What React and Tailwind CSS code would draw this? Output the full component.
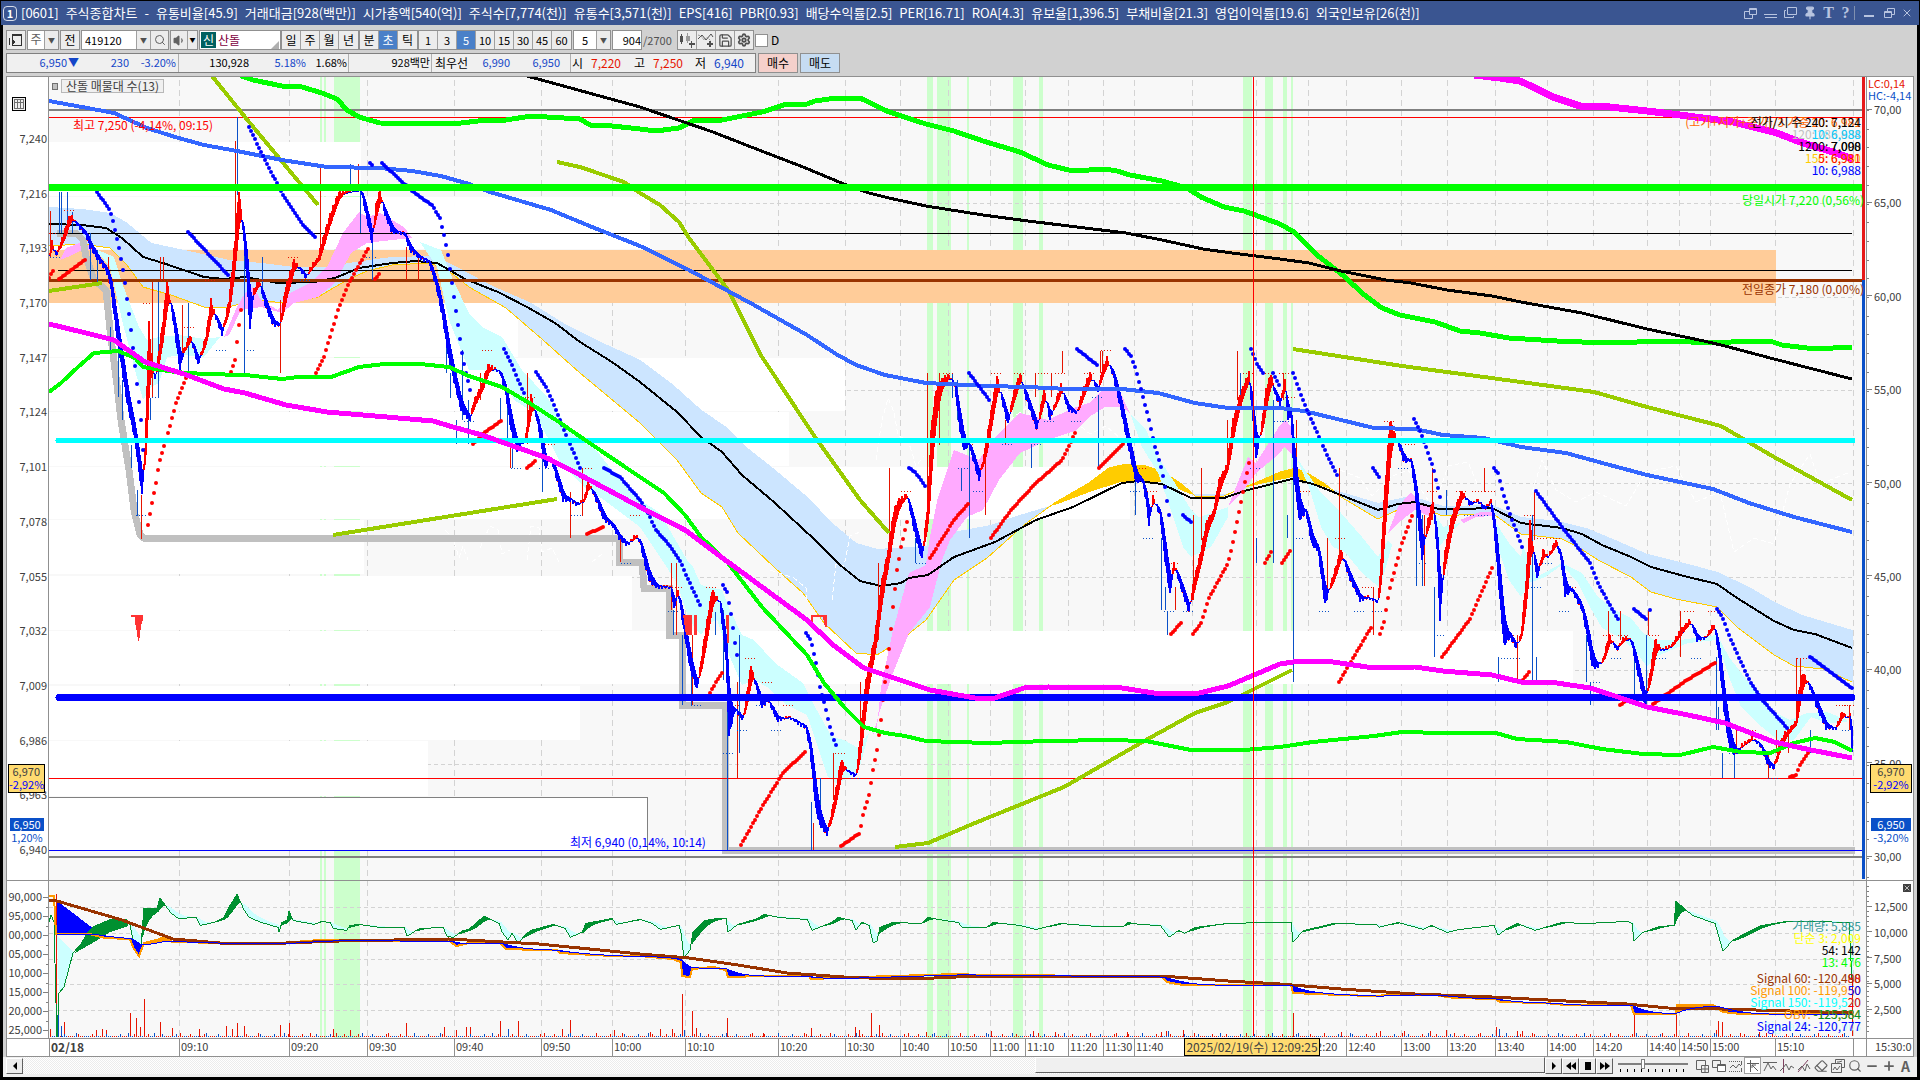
import { Search, Save, Settings, Volume1, Pin, Minus, Plus, X, Eraser } from 'lucide-react'

const FACTS = [
  '[0601]', '주식종합차트', '-', '유통비율[45.9]', '거래대금[928(백만)]', '시가총액[540(억)]', '주식수[7,774(천)]',
  '유통수[3,571(천)]', 'EPS[416]', 'PBR[0.93]', '배당수익률[2.5]', 'PER[16.71]', 'ROA[4.3]', '유보율[1,396.5]',
  '부채비율[21.3]', '영업이익률[19.6]', '외국인보유[26(천)]',
]
const TIMES = [
  ['02/18', 130], ['09:10', 110], ['09:20', 78], ['09:30', 87], ['09:40', 87], ['09:50', 71],
  ['10:00', 73], ['10:10', 93], ['10:20', 67], ['10:30', 55], ['10:40', 48], ['10:50', 42],
  ['11:00', 35], ['11:10', 43], ['11:20', 35], ['11:30', 31], ['11:40', 58], ['11:50', 64],
  ['12:10', 52], ['12:20', 38], ['12:40', 55], ['13:00', 46], ['13:20', 48], ['13:40', 52],
  ['14:00', 46], ['14:20', 54], ['14:40', 32], ['14:50', 31], ['15:00', 65], ['15:10', 78], ['', 13],
]
const GRID_X = TIMES.reduce((xs, [, w]) => [...xs, xs[xs.length - 1] + w], [49]).slice(1, -1)
const GRID_Y = [203, 297, 390, 483, 577, 670, 764, 907, 933, 959, 984, 1010]
const PRICES = ['7,240', '7,216', '7,193', '7,170', '7,147', '7,124', '7,101', '7,078', '7,055', '7,032', '7,009', '6,986', '6,963', '6,940']
const SCALE = ['70,00', '65,00', '60,00', '55,00', '50,00', '45,00', '40,00', '35,00', '30,00']
const OBV_LEFT = ['90,000', '95,000', '00,000', '05,000', '10,000', '15,000', '20,000', '25,000']
const OBV_RIGHT = ['12,500', '10,000', '7,500', '5,000', '2,500']

// signal zones: [x, width]
const ZONES = [
  [320, 2], [324, 2], [334, 26], [927, 6], [937, 14], [967, 2], [1013, 10], [1039, 4],
  [1243, 9], [1265, 8], [1283, 4], [1291, 2],
]
// volume profile: [top, bottom, right]
const PROFILE = [
  [142, 196, 361], [197, 249, 650], [303, 357, 518], [358, 411, 845], [412, 466, 789],
  [467, 519, 1130], [520, 574, 364], [576, 630, 632], [631, 684, 1573], [686, 740, 580], [741, 796, 428],
]

const LINES = [
  { c: '#00ff00', w: 5, p: '241,76 253,80 282,86 302,87 322,93 337,99 347,110 359,117 380,123 453,124 478,121 506,120 531,116 580,119 590,125 612,126 640,129 656,131 679,128 695,120 722,120 762,112 787,104 807,104 815,101 836,98 860,98 889,112 926,124 954,131 983,141 1020,152 1048,165 1073,171 1105,169 1117,171 1130,175 1162,181 1187,188 1201,197 1224,207 1244,211 1280,224 1294,232 1317,255 1345,277 1362,293 1382,308 1400,315 1435,322 1460,331 1480,333 1509,338 1557,341 1607,343 1668,341 1713,343 1749,341 1770,341 1782,345 1815,349 1852,347' },
  { c: '#000', w: 3, p: '527,76 640,107 681,121 713,132 746,145 803,167 844,184 869,193 889,198 926,206 983,215 1028,221 1126,233 1162,240 1203,249 1232,253 1280,259 1309,263 1341,271 1386,280 1411,283 1447,290 1492,296 1521,302 1582,313 1647,329 1704,341 1725,346 1774,359 1852,379' },
  { c: '#99cc00', w: 4, p: '212,76 245,117 318,205' },
  { c: '#99cc00', w: 4, p: '49,291 102,283' },
  { c: '#99cc00', w: 4, p: '333,535 445,517 557,499' },
  { c: '#99cc00', w: 4, p: '557,162 580,167 624,182 640,193 660,205 679,222 689,238 728,290 762,357 815,437 860,500 889,533' },
  { c: '#99cc00', w: 4, p: '895,847 928,843 975,823 1064,787 1146,740 1195,713 1228,702 1280,676 1292,670' },
  { c: '#99cc00', w: 4, p: '1293,349 1402,366 1484,377 1594,392 1647,407 1721,426 1774,457 1852,500' },
  { c: '#3366ff', w: 4, p: '49,101 82,107 114,113 147,128 175,137 204,145 237,151 282,160 327,167 380,168 412,171 441,176 469,184 490,192 551,210 592,227 640,246 689,270 754,305 807,335 836,354 856,365 885,375 926,383 987,386 1028,387 1068,389 1122,389 1158,393 1195,403 1228,408 1280,408 1304,411 1374,428 1415,429 1443,435 1484,438 1521,447 1566,453 1606,464 1647,475 1713,489 1749,503 1794,517 1852,532' },
]

const TOP_LINES = [
  { c: '#00ff00', w: 4, p: '49,392 61,383 78,367 94,353 118,351 135,358 143,367 175,372 204,374 245,375 282,379 298,377 331,377 359,367 384,364 420,364 449,367 469,376 502,387 531,404 559,422 588,442 640,477 664,493 685,515 701,537 728,563 762,607 807,655 824,683 844,707 864,727 885,733 905,736 926,741 987,743 1048,741 1109,740 1146,741 1191,750 1244,750 1280,747 1313,742 1374,736 1402,732 1443,733 1496,733 1517,739 1566,742 1602,749 1643,754 1680,755 1713,747 1741,752 1770,753 1794,743 1815,738 1835,742 1852,751' },
  { c: '#ff00ff', w: 5, p: '49,324 82,332 114,340 145,362 184,374 224,389 245,393 286,405 327,412 375,416 433,421 453,427 482,435 510,445 547,458 584,477 640,507 685,530 728,562 807,620 832,644 864,668 897,679 930,690 975,698 995,698 1024,688 1048,687 1122,688 1154,693 1195,694 1228,686 1280,664 1300,661 1333,662 1374,668 1415,667 1443,671 1492,675 1521,682 1557,683 1590,688 1615,696 1647,707 1688,715 1725,723 1774,742 1811,750 1852,758' },
  { c: '#ff00ff', w: 7, p: '1474,75 1500,78 1520,81 1533,87 1553,97 1580,106 1610,107 1647,111 1680,115 1733,122 1777,133 1800,142 1833,152 1853,159' },
]

const MID = '49,224 82,225 106,228 122,238 143,257 163,263 204,277 224,279 245,277 278,283 314,282 335,278 359,268 392,263 416,261 437,263 465,279 498,292 527,307 555,323 580,342 612,362 640,382 677,412 701,437 722,452 742,475 775,503 815,540 840,565 860,581 881,586 901,583 909,578 928,575 954,557 995,542 1036,520 1073,507 1122,483 1138,481 1162,484 1191,498 1224,498 1244,491 1280,482 1292,479 1313,484 1341,495 1378,510 1398,504 1415,502 1439,509 1460,509 1492,508 1521,523 1562,528 1582,534 1602,545 1631,557 1651,567 1684,576 1717,584 1737,598 1774,621 1794,630 1815,634 1852,648'
const BAND_TOP = '49,207 82,209 110,213 127,223 151,243 184,250 229,260 261,263 294,267 327,267 355,262 392,257 433,256 449,263 490,285 531,303 563,323 596,340 640,360 673,385 701,410 726,427 746,447 775,470 807,497 832,523 856,543 877,549 926,546 954,532 991,525 1020,515 1060,503 1089,492 1120,482 1162,482 1191,494 1228,494 1250,486 1292,477 1341,492 1378,503 1411,496 1443,506 1492,505 1521,517 1557,521 1586,528 1615,540 1647,554 1688,564 1717,572 1749,587 1774,602 1802,615 1852,630'
const BAND_BOTTOM = '49,246 82,244 110,248 127,265 143,287 171,295 204,307 229,307 253,300 286,303 318,297 347,280 367,271 392,265 429,263 445,268 469,287 506,308 543,340 580,373 604,393 640,423 677,460 701,493 722,507 738,533 775,568 803,593 824,623 856,653 877,655 901,640 926,620 954,580 987,558 1005,542 1024,525 1056,502 1089,483 1109,468 1126,464 1146,466 1162,471 1183,485 1195,496 1224,496 1240,489 1262,480 1280,472 1296,468 1309,474 1325,484 1341,497 1378,519 1402,508 1419,507 1443,516 1492,513 1521,534 1562,539 1578,547 1598,560 1631,577 1651,592 1676,599 1717,607 1737,627 1774,655 1794,666 1823,669 1852,682'

const CLOUDS = [
  ['#ccffff', '98,250 114,257 122,283 139,327 147,340 159,337 180,335 192,337 204,339 220,337 204,357 184,355 167,357 159,383 151,387 143,400 135,370 122,320 110,267 98,253'],
  ['#ffaaff', '60,260 66,248 82,242 98,250 82,250 70,256'],
  ['#ffaaff', '224,337 237,307 245,293 253,287 261,300 278,310 290,293 310,283 327,267 343,233 359,212 367,217 380,213 392,220 404,227 412,238 392,240 367,243 351,253 335,283 318,297 294,303 282,313 261,307 241,310 229,335'],
  ['#ccffff', '420,242 441,250 453,280 469,313 482,327 502,337 522,370 547,397 571,433 596,450 612,470 640,500 660,513 687,560 693,567 701,585 722,590 730,610 742,635 754,640 775,663 803,683 815,707 832,737 844,740 858,748 869,733 858,773 844,780 836,783 828,777 820,753 807,715 787,705 767,687 754,680 742,685 730,657 717,620 709,623 701,635 689,620 677,583 660,557 640,527 604,500 584,487 559,460 535,413 514,400 502,373 486,370 469,370 449,320 437,267'],
  ['#ffaaff', '877,727 881,687 893,630 909,573 926,565 930,537 938,497 954,450 979,460 995,437 1020,413 1048,420 1073,408 1089,403 1105,388 1118,388 1130,413 1122,407 1105,407 1089,417 1077,430 1048,440 1020,453 999,480 983,510 967,517 950,540 942,560 930,607 909,633 893,673 881,707 873,735'],
  ['#ccffff', '1130,413 1146,430 1158,457 1175,483 1191,510 1199,517 1211,513 1228,507 1228,517 1211,547 1191,557 1183,547 1171,510 1158,473 1142,447'],
  ['#ffaaff', '1228,507 1248,457 1256,463 1280,425 1286,420 1293,430 1295,457 1284,447 1280,453 1256,473 1244,490'],
  ['#ccffff', '1296,457 1321,493 1341,513 1362,537 1378,557 1388,540 1392,545 1380,588 1362,573 1345,552 1333,547 1321,527 1309,487'],
  ['#ffaaff', '1388,533 1398,507 1411,492 1419,502 1431,507 1431,517 1415,510 1398,523'],
  ['#ccffff', '1433,510 1443,527 1460,523 1447,537 1439,547'],
  ['#ffaaff', '1460,520 1480,512 1492,512 1492,516 1476,517 1464,523'],
  ['#ccffff', '1494,520 1509,543 1521,557 1523,547 1537,577 1562,563 1582,573 1598,597 1615,610 1631,618 1643,633 1655,640 1680,640 1717,635 1729,657 1749,683 1770,710 1790,720 1807,713 1827,712 1847,720 1847,722 1827,723 1811,717 1794,740 1778,740 1762,727 1741,707 1729,677 1717,640 1688,643 1655,657 1647,667 1635,650 1619,637 1602,628 1590,607 1578,583 1562,565 1545,577 1529,583 1521,597 1509,580 1498,547'],
]

const PRICE = '49,257 52,242 56,256 63,236 70,214 78,226 86,235 90,247 98,260 106,270 110,282 116,330 127,402 135,440 142,495 145,450 149,320 151,355 155,380 163,320 167,282 171,305 180,370 184,350 190,335 198,365 206,335 211,300 215,315 222,335 229,300 235,240 239,190 243,230 247,280 250,330 254,290 259,280 265,305 273,325 280,325 285,290 294,260 306,278 312,265 318,258 324,235 330,215 339,192 361,190 366,215 372,243 376,205 380,190 385,215 392,232 404,233 410,250 420,258 429,262 437,290 443,320 449,360 461,410 470,420 474,400 482,385 488,365 500,372 506,395 511,430 517,450 525,440 531,395 537,420 545,468 551,458 557,480 563,500 571,500 577,505 584,500 588,480 594,495 604,520 612,525 619,538 627,545 636,535 640,542 645,565 650,582 657,587 671,587 674,610 678,590 683,625 690,668 697,690 704,640 712,590 720,603 726,660 729,735 735,710 743,720 751,665 758,695 762,707 768,700 777,720 789,717 797,722 806,728 810,750 816,810 820,825 827,835 835,795 841,760 847,770 856,777 860,740 866,680 875,635 881,585 888,550 894,510 899,500 907,494 914,530 922,560 928,500 931,430 936,390 943,378 949,375 955,388 960,430 964,450 969,445 979,480 985,450 992,405 997,376 1003,405 1008,425 1013,395 1020,373 1025,395 1030,410 1037,430 1044,388 1050,420 1056,400 1061,385 1068,410 1077,413 1083,390 1090,373 1098,392 1102,370 1107,358 1113,375 1121,410 1128,445 1136,482 1142,480 1146,500 1149,525 1153,497 1160,515 1165,560 1170,595 1174,562 1180,585 1189,612 1194,580 1200,555 1207,520 1213,513 1219,480 1227,465 1233,420 1240,395 1249,373 1252,410 1256,460 1261,430 1266,390 1271,373 1275,395 1280,405 1285,380 1288,420 1291,415 1294,480 1297,500 1299,520 1306,512 1312,545 1318,550 1325,605 1331,583 1341,550 1349,577 1360,600 1368,597 1378,602 1381,560 1384,500 1390,420 1397,440 1404,462 1411,460 1416,500 1422,560 1428,520 1433,500 1437,550 1440,620 1445,550 1452,515 1462,491 1470,505 1478,500 1484,510 1491,500 1495,540 1500,600 1504,645 1510,637 1516,647 1521,635 1526,580 1530,522 1537,580 1543,550 1548,557 1556,540 1561,560 1565,595 1572,590 1582,610 1588,640 1592,665 1596,668 1603,660 1609,635 1617,650 1624,637 1631,640 1637,670 1645,705 1649,680 1655,640 1662,650 1672,645 1681,630 1690,620 1697,640 1706,637 1714,623 1718,650 1724,710 1729,745 1735,755 1742,745 1752,738 1760,745 1768,765 1774,768 1779,745 1785,733 1796,722 1799,690 1803,672 1809,685 1816,705 1826,728 1836,728 1842,712 1848,718 1850,712 1852,752'

const STOP = '57,233 76,233 83,240 86,257 94,280 106,290 110,330 117,385 121,420 129,470 134,510 140,535 144,538 619,538 619,562 642,562 644,588 669,588 669,635 682,635 682,705 725,705 725,850 1855,850'

const SAR_DOWN = [
  '97,192 110,210 114,225 118,243 124,275 131,330 136,375 141,420 143,450', '188,232 228,275',
  '249,127 265,160 282,193 303,225 315,237', '370,163 373,166',
  '382,163 400,180 416,194 432,205 440,218 444,235 448,255 453,290 458,325 463,360 470,390',
  '504,349 512,365 518,380 525,395', '536,372 545,385 552,400 560,420 568,440 575,455 580,468',
  '604,468 620,477 640,500 648,513 656,530 671,547 681,562 687,577 701,607',
  '723,585 727,592 732,620 735,643 737,655', '806,633 811,640 816,663 820,687 826,710 830,727 834,740 837,748',
  '909,468 915,472 926,487', '969,373 990,401', '1077,349 1097,365',
  '1125,349 1131,356 1136,370 1143,397 1149,420 1155,447 1160,463 1164,480 1169,515', '1183,515 1192,523',
  '1251,349 1256,362 1263,373', '1273,373 1280,387', '1293,373 1304,403 1317,432 1327,455 1337,475',
  '1373,468 1379,477', '1414,419 1421,433 1427,450 1433,467 1440,497',
  '1494,468 1498,473 1503,493 1511,517 1517,533 1522,547', '1536,491 1562,527 1590,563 1598,583 1607,600 1619,621',
  '1634,609 1647,620', '1650,610 1650,610', '1717,609 1722,616 1729,635 1739,658 1751,683 1764,702 1788,729',
  '1810,657 1852,688',
]
const SAR_UP = [
  '49,278 54,269', '59,279 86,259', '148,525 152,503 156,483 159,463 165,443 169,430 176,403 186,378',
  '231,372 235,360 238,333 241,310 242,300', '316,373 324,357 329,340 339,307 349,283 369,247',
  '375,279 380,273', '473,444 484,433 502,420', '527,468 535,461', '587,534 603,527', '710,693 716,682 722,673',
  '741,845 762,807 783,773 805,752',
  '841,846 860,833 862,818 869,795 873,770 877,750 881,720 884,690 887,667 890,640 893,607 897,570 901,547 907,522',
  '930,558 954,520 968,504', '991,538 1011,510 1036,483 1062,460 1067,450 1075,433', '1099,468 1124,443',
  '1171,634 1182,622', '1193,634 1201,623 1209,598 1228,563 1232,547 1238,517 1244,487 1249,463',
  '1265,563 1271,552', '1282,563 1291,549', '1339,682 1372,626', '1380,634 1384,622 1389,592 1396,565 1402,543 1413,513',
  '1442,657 1470,619 1492,568', '1523,680 1530,671', '1620,705 1626,701', '1653,704 1684,682 1715,663',
  '1790,777 1796,775 1800,765 1808,753',
]

// candle wicks: x, top, bottom
const WICKS_UP = [
  [50, 211, 257], [108, 257, 283], [141, 495, 539], [152, 282, 398], [160, 257, 280], [163, 257, 280],
  [182, 305, 355], [235, 141, 230], [280, 300, 373], [320, 164, 260], [358, 164, 187], [406, 247, 280],
  [418, 255, 280], [480, 373, 400], [510, 444, 468], [527, 373, 444], [570, 492, 538], [582, 468, 516],
  [620, 538, 562], [671, 563, 610], [676, 563, 635], [692, 635, 705], [737, 682, 778], [813, 823, 850],
  [833, 753, 800], [860, 682, 760], [878, 563, 640], [889, 468, 560], [927, 373, 520], [939, 373, 445],
  [985, 440, 515], [1005, 420, 445], [1035, 373, 397], [1051, 373, 397], [1062, 351, 373], [1100, 351, 373],
  [1102, 351, 373], [1175, 587, 610], [1193, 515, 600], [1201, 468, 540], [1227, 420, 470], [1237, 351, 400],
  [1283, 373, 400], [1296, 420, 480], [1327, 538, 600], [1339, 468, 560], [1373, 587, 635], [1424, 515, 586],
  [1432, 468, 520], [1484, 468, 492], [1517, 635, 682], [1534, 492, 540], [1608, 611, 650], [1620, 611, 640],
  [1648, 611, 635], [1680, 611, 657], [1736, 730, 753], [1768, 753, 778], [1776, 730, 753], [1788, 730, 753],
  [1796, 658, 720], [1800, 658, 690], [1849, 705, 730],
]
const WICKS_DOWN = [
  [59, 192, 233], [61, 192, 233], [67, 192, 230], [72, 212, 233], [90, 233, 280], [97, 250, 283],
  [110, 327, 350], [118, 340, 397], [122, 380, 420], [131, 445, 468], [137, 490, 516], [150, 398, 420],
  [158, 282, 398], [188, 303, 373], [237, 117, 195], [244, 230, 373], [262, 257, 298], [350, 164, 187],
  [360, 190, 233], [372, 240, 280], [446, 330, 373], [450, 373, 398], [456, 420, 444], [462, 350, 420],
  [468, 400, 444], [500, 398, 420], [507, 400, 444], [512, 444, 468], [542, 430, 492], [673, 610, 635],
  [682, 635, 705], [691, 668, 705], [715, 612, 635], [723, 610, 680], [727, 640, 850], [739, 635, 753],
  [811, 802, 850], [820, 778, 825], [915, 538, 563], [952, 373, 398], [957, 380, 420], [961, 468, 491],
  [969, 440, 538], [1031, 445, 468], [1098, 395, 468], [1135, 480, 515], [1161, 538, 610], [1165, 587, 610],
  [1167, 612, 635], [1240, 373, 400], [1256, 538, 563], [1273, 400, 563], [1287, 515, 538], [1293, 480, 682],
  [1416, 500, 586], [1422, 515, 586], [1434, 587, 657], [1446, 490, 515], [1498, 657, 682], [1532, 515, 682],
  [1536, 657, 682], [1586, 635, 682], [1590, 682, 705], [1634, 657, 705], [1646, 635, 705], [1716, 657, 730],
  [1718, 707, 730], [1722, 753, 778], [1734, 753, 778], [1810, 730, 753],
]
const TICKS = [117, 164, 188, 210, 233, 257, 280, 303, 327, 350, 373, 397, 421, 444, 468, 491, 515, 538, 563, 587, 611, 635, 658, 682, 705, 730, 753, 778, 802, 826, 850]

const BROWN = '49,900 57,901 122,920 173,939 220,943 286,943 339,941 449,939 539,944 640,954 689,958 738,965 787,973 844,977 869,978 934,978 979,976 1162,976 1228,981 1280,984 1341,989 1415,994 1492,997 1566,1001 1627,1004 1668,1008 1721,1009 1790,1011 1852,1013'
const OBV = '57,934 90,934 94,935 102,937 106,938 130,939 133,947 139,956 144,943 157,940 163,937 173,942 224,943 280,943 320,940 450,941 456,946 469,943 500,943 506,949 540,950 557,950 560,953 612,956 640,956 673,959 681,962 682,976 690,977 692,969 713,967 726,970 728,977 762,976 775,976 809,976 811,979 860,977 958,974 979,975 1130,976 1162,977 1167,982 1183,985 1252,985 1291,985 1293,993 1341,995 1374,996 1402,994 1435,995 1455,998 1496,999 1500,1002 1545,1003 1566,1005 1631,1005 1634,1014 1676,1014 1677,1005 1713,1005 1723,1012 1741,1014 1852,1014'
const FORCE = '102,923 127,920 130,925 133,940 141,945 144,908 157,908 160,898 171,913 178,918 196,917 200,925 214,922 224,917 229,907 237,894 244,910 249,917 261,922 278,927 279,932 282,922 287,920 289,911 293,920 314,924 322,921 330,922 333,928 347,930 350,925 359,924 380,927 404,927 407,936 420,928 443,927 447,936 454,937 463,930 469,929 484,916 499,923 502,932 508,940 512,933 518,943 527,933 531,930 553,924 565,928 570,937 582,932 586,923 612,918 616,924 640,919 652,923 660,929 679,925 681,933 684,958 690,950 693,932 705,920 718,918 726,918 728,932 738,924 758,918 764,914 779,917 793,918 807,919 812,930 832,922 838,917 852,920 856,930 862,922 869,925 873,942 877,941 880,927 893,922 922,923 928,917 944,920 958,922 962,927 987,927 993,922 1020,925 1036,929 1060,923 1097,926 1124,926 1128,922 1140,924 1160,925 1169,937 1179,930 1185,933 1195,927 1228,923 1264,922 1291,922 1293,942 1304,930 1317,927 1333,923 1376,924 1379,927 1398,922 1423,929 1431,925 1447,932 1460,929 1494,925 1498,935 1509,927 1517,923 1535,930 1562,922 1586,923 1627,921 1632,923 1634,941 1643,932 1660,926 1674,925 1676,901 1692,915 1715,923 1723,951 1733,940 1745,933 1762,925 1786,921 1815,921 1849,922 1852,980'

const VOLUME_UP = [
  [50, 1029], [64, 1022], [96, 1030], [102, 1029], [106, 1030], [130, 1013], [136, 1018], [140, 1027], [144, 999],
  [160, 1022], [172, 1028], [199, 1029], [226, 1026], [232, 1029], [237, 1023], [244, 1026], [280, 1025],
  [289, 1023], [333, 1029], [350, 1030], [406, 1023], [444, 1027], [456, 1030], [466, 1027], [470, 1027],
  [500, 1021], [518, 1021], [562, 1029], [570, 1020], [614, 1030], [650, 1032], [660, 1029], [672, 1029],
  [682, 994], [692, 1011], [696, 1028], [727, 1018], [763, 1033], [811, 1028], [855, 1027], [859, 1030],
  [871, 1013], [879, 1025], [926, 1032], [991, 1031], [1033, 1031], [1055, 1032], [1127, 1032], [1161, 1032],
  [1166, 1031], [1183, 1030], [1293, 1013], [1341, 1032], [1380, 1031], [1404, 1031], [1430, 1031], [1446, 1030],
  [1496, 1027], [1517, 1031], [1522, 1031], [1634, 1005], [1676, 1010], [1716, 1030], [1718, 1021], [1722, 1022],
  [1759, 1032],
]

const parse = (s) => s.split(' ').map((p) => p.split(',').map(Number))

function sample(s, step) {
  const pts = parse(s)
  const out = []
  let i = 0
  for (let x = pts[0][0]; x <= pts[pts.length - 1][0]; x += step) {
    while (i < pts.length - 2 && pts[i + 1][0] < x) i++
    const [x0, y0] = pts[i]
    const [x1, y1] = pts[i + 1]
    out.push([x, x1 === x0 ? y0 : y0 + ((y1 - y0) * (x - x0)) / (x1 - x0)])
  }
  return out
}

function ema(pts, k) {
  let v = pts[0][1]
  return pts.map(([x, y]) => {
    v += (y - v) * k
    return [x, v]
  })
}

const toPath = (pts) => 'M' + pts.map(([x, y]) => `${x} ${Math.round(y)}`).join('L')

// vertical strips between two lines, split by which one is on top
function between(a, b) {
  let up = ''
  let down = ''
  a.forEach(([x, y], i) => {
    const s = `M${x} ${Math.round(y)}V${Math.round(b[i][1])}`
    if (y < b[i][1]) up += s
    else down += s
  })
  return { up, down }
}

const dots = (list) => list.map((s) => sample(s, 2).map(([x, y]) => `M${x} ${Math.round(y)}h.01`).join('')).join('')
const wicks = (list) => list.map(([x, a, b]) => `M${x + 0.5} ${a}V${b}`).join('')

const fast = sample(PRICE, 1).map(([x, y]) => [x, y + Math.sin(x * 1.9) * 2])
const slow = ema(fast, 0.22)
const priceFill = between(fast, slow)
const bandTop = sample(BAND_TOP, 1)
const bandFill = between(bandTop, sample(BAND_BOTTOM, 1))
const force = sample(FORCE, 1)
const forceAvg = ema(force, 0.12)
const forceFill = between(force, forceAvg)
const obv = sample(OBV, 1)
const obvAvg = ema(obv, 0.06)
const obvFill = between(obv, obvAvg)

// dotted high and low marks at each turn of the price
const turns = parse(PRICE).reduce(
  (acc, [x, y], i, all) => {
    if (i === 0 || i === all.length - 1) return acc
    const [a, b] = [all[i - 1][1], all[i + 1][1]]
    if (y < a && y < b) acc.high += `M${x - 6} ${[...TICKS].reverse().find((t) => t <= y + 2) || 117}.5h12`
    if (y > a && y > b) acc.low += `M${x - 6} ${TICKS.find((t) => t >= y - 2)}.5h12`
    return acc
  },
  { high: '', low: '' },
)

let noiseUp = ''
let noiseDown = ''
for (let i = 0; i < 900; i++) {
  const h = 1 + ((i * 7919) % 13 === 0 ? 3 : (i * 31) % 7 === 0 ? 2 : 0)
  const s = `M${50.5 + i * 2} 1037v-${h}`
  if ((i * 53) % 11 < 6) noiseUp += s
  else noiseDown += s
}

function Chart() {
  return (
    <svg viewBox="49 77 1817 961" preserveAspectRatio="none" className="block h-[961px] w-full" fill="none" shapeRendering="crispEdges">
      <rect x="49" y="77" width="1817" height="961" fill="#f8f8f8" />
      {ZONES.map(([x, w]) => (
        <rect key={x} x={x} y="77" width={w} height="961" fill="#ccffcc" />
      ))}
      <g stroke="#d3d3d3" strokeDasharray="6 4">
        {GRID_X.map((x) => (
          <path key={x} d={`M${x + 0.5} 80V1038`} />
        ))}
        {GRID_Y.map((y) => (
          <path key={y} d={`M49 ${y}.5H1852`} strokeDasharray="4 3" />
        ))}
      </g>
      {PROFILE.map(([a, b, r]) => (
        <rect key={a} x="49" y={a} width={r - 49} height={b - a} fill="#fff" />
      ))}
      <rect x="48" y="797.5" width="599.5" height="53" fill="#fff" stroke="#808080" />
      <rect x="49" y="250" width="1727" height="53" fill="#ffcc99" />
      <g stroke="#fff" strokeDasharray="5 3">
        <path d="M445 530l8 8 6 20 4-12 5 14M480 548l10-22 8 4 4 24 8-4M527 560l4-34 8 2 3 24 10-4 8 16M592 562l10-8" />
        <path d="M876 460l6-40 6-22 6 14 4 24 10 4 8 26 8-10M1010 420l16-12 8 14 12-10 14 16 18-4 12 10 16-8 14 12" />
        <path d="M1330 500l10-30 20 8 12 18 20-20 16-6 20 30M1440 490l8-24 20-4 10 24M1530 500l12-40 14 30 20 12 20-10 30 14 20-34 30-6 20 36 24-10 14 60 20-14 20 6 16-60 20-30 10 30 30-12" />
      </g>

      <path d={bandFill.up} stroke="#cce5ff" strokeWidth="1.6" />
      <path d={bandFill.down} stroke="#ffcc00" strokeWidth="1.6" />
      <polyline points={BAND_BOTTOM} stroke="#ffcc00" />
      <path d="M770 570l24 8 12 10v14M832 600l4-36 8 2 6-30 10-4" stroke="#fff" strokeDasharray="5 3" />
      {CLOUDS.map(([c, p]) => (
        <polygon key={p} points={p} fill={c} />
      ))}
      <polyline points={STOP} stroke="#c0c0c0" strokeWidth="7" />
      <polyline points={MID} stroke="#000" strokeWidth="2" />

      <path d="M49 110H1862" stroke="#808080" strokeWidth="2" />
      <path d="M49 857H1862" stroke="#808080" strokeWidth="2" />
      <path d="M49 233.5H1852M58 270.5H1852" stroke="#000" />
      <path d="M49 117.5H1862M49 778.5H1862" stroke="#ff0000" />
      <path d="M49 280.5H1862" stroke="#993300" strokeWidth="3" />

      <path d={wicks(WICKS_UP)} stroke="#e61400" />
      <path d={wicks(WICKS_DOWN)} stroke="#0a50c8" />
      <path d={turns.high} stroke="#e61400" strokeDasharray="1 2" />
      <path d={turns.low} stroke="#0a50c8" strokeDasharray="1 2" />
      <path d={toPath(fast)} stroke="#ff0000" />
      <path d={toPath(slow)} stroke="#0000d8" />
      <path d={priceFill.up} stroke="#ff0000" strokeWidth="1.6" />
      <path d={priceFill.down} stroke="#0000ff" strokeWidth="1.6" />
      <path d="M131 615h12v5l-2 6-1 9-1 6h-1l-1-8-2-11v-5h-4zM683 615h9v20h-6zM694 615h3v20h-3zM726 615h3v28h-2z" fill="#ff3333" />
      <path d="M812 625v-9h14v11l-2-10" stroke="#ff3333" strokeWidth="2" />

      {LINES.map((l) => (
        <polyline key={l.p} points={l.p} stroke={l.c} strokeWidth={l.w} />
      ))}
      <g strokeWidth="4" strokeLinecap="round" shapeRendering="auto">
        <path d={dots(SAR_DOWN)} stroke="#0000ff" />
        <path d={dots(SAR_UP)} stroke="#ff0000" />
      </g>
      <path d="M49 187.5H1862" stroke="#00ff00" strokeWidth="7" />
      <path d="M58 440.5H1853" stroke="#00ffff" strokeWidth="5" strokeLinecap="round" />
      <path d="M59 697.5H1852" stroke="#0000ff" strokeWidth="7" strokeLinecap="round" />
      {TOP_LINES.map((l) => (
        <polyline key={l.p} points={l.p} stroke={l.c} strokeWidth={l.w} />
      ))}
      <path d="M49 850.5H1862" stroke="#0000ff" />
      <path d="M1863.5 77V280" stroke="#e61919" strokeWidth="3" />
      <path d="M1863.5 280V879" stroke="#0a50c8" strokeWidth="3" />

      <path d="M49 880.5H1866" stroke="#909090" />
      <path d={noiseUp + VOLUME_UP.map(([x, y]) => `M${x + 0.5} 1037V${y}`).join('')} stroke="#e61400" />
      <path d={noiseDown + 'M58.5 1037V1003M61.5 1037V1026M508.5 1037V1029M1499.5 1037V1029M684.5 1037V1030M1168.5 1037V1031'} stroke="#0a50c8" />
      <path d="M56.5 894V1037M1852.5 970V1036" stroke="#e61400" />
      <path d="M57 935L66 945L74 953L69 970L64 986L59 993z" fill="#ccffff" />
      <path d={forceFill.down} stroke="#ccffff" strokeWidth="1.6" />
      <path d="M57 901L102 935H57z" fill="#0000ff" />
      <path d="M75 953L88 931L94 926L110 919L127 919L128 926L110 932L96 941z" fill="#009030" />
      <path d={forceFill.up} stroke="#009030" strokeWidth="1.6" />
      <path d={'M49 922L51 915L54 922L56 1003L57 1037L59 993L64 987L73 953L82 943L88 933' + toPath(force).replace('M', 'L')} stroke="#009030" />
      <path d={obvFill.up} stroke="#ff9900" strokeWidth="1.6" />
      <path d={obvFill.down} stroke="#0000ff" strokeWidth="1.6" />
      <path d={'M49 896L54 896L56 934' + toPath(obv).replace('M', 'L')} stroke="#ff9900" strokeWidth="2" />
      <polyline points={BROWN} stroke="#993300" strokeWidth="3" />
      <path d={toPath(obvAvg)} stroke="#0000ff" />
      <path d="M1253.5 77V1036" stroke="#ff0000" />
    </svg>
  )
}

function Overlap({ texts }) {
  return (
    <div className="grid justify-items-end">
      {texts.map(([t, c]) => (
        <span key={t} className={`col-start-1 row-start-1 ${c}`}>{t}</span>
      ))}
    </div>
  )
}

function Labels() {
  return (
    <div className="pointer-events-none absolute inset-0 text-xs leading-3 whitespace-nowrap">
      <div className="absolute top-0.5 left-[3px] flex items-center gap-[3px]">
        <span className="h-[7px] w-[6px] border border-[#707070] bg-[#c0c0c0]" />
        <span className="border border-[#b8b8b8] bg-[#f0f0f0] px-1 text-[#404040]">산돌 매물대 수(13)</span>
      </div>
      <span className="absolute top-[42px] left-6 text-[#ff0000]">최고 7,250 (-4,14%, 09:15)</span>
      <span className="absolute top-[759px] left-[521px] text-[#0000ff]">최저 6,940 (0,14%, 10:14)</span>
      <div className="absolute top-[39px] right-[5px]">
        <Overlap texts={[['(고가+저가+종가)/3 가중 20: 6,981', 'text-[#ff6600]'], ['전가/시 수 240: 7,124', 'text-black']]} />
        <Overlap texts={[['120: 288,834', 'text-[#c0c0c0]'], ['10: 6,988', 'text-[#00ccff]']]} />
        <Overlap texts={[['1200: 7,098', 'text-black'], ['7,000', 'text-black']]} />
        <Overlap texts={[['150: 6,990', 'text-[#ffcc00]'], ['5: 6,981', 'text-[#ff0000]']]} />
        <Overlap texts={[['30: 6,988', 'text-[#cce5ff]'], ['10: 6,988', 'text-[#0000ff]']]} />
      </div>
      <span className="absolute top-[117px] right-0.5 text-[#00ff00]">당일시가 7,220 (0,56%)</span>
      <span className="absolute top-[206px] right-0.5 text-[#993300]">전일종가 7,180 (0,00%)</span>
      <div className="absolute top-[843px] right-[5px] text-right">
        <p className="text-[#339999]">거래량: 5,885</p>
        <p className="text-[#ffff00]">단순 3: 2,009</p>
        <p className="text-black">54: 142</p>
        <p className="text-[#00ff00]">13: 476</p>
        <div className="mt-1">
          <Overlap texts={[['88', 'text-[#ff0000]'], ['Signal 60: -120,490', 'text-[#993300]']]} />
          <Overlap texts={[['Signal 100: -119,950', 'text-[#ff9900]'], ['50', 'text-[#0000ff]']]} />
          <Overlap texts={[['Signal 150: -119,520', 'text-[#00ffff]'], ['20', 'text-[#ff0000]']]} />
          <Overlap texts={[['OBV: -125,504', 'text-[#ff9900]'], ['-125,584', 'text-[#009030]']]} />
          <Overlap texts={[['Signal 9: -120,903', 'text-[#ccffff]'], ['Signal 24: -120,777', 'text-[#0000ff]']]} />
        </div>
      </div>
    </div>
  )
}

function LeftAxis() {
  return (
    <div className="relative w-[42px] shrink-0 border-r border-[#909090] bg-white text-right text-[11px] leading-[14px] text-[#404040]">
      <div className="flex h-[804px] flex-col justify-between border-b border-[#909090] pt-[54px] pr-px pb-6">
        {PRICES.map((p) => <span key={p}>{p}</span>)}
      </div>
      <div className="flex h-[157px] flex-col justify-between pt-2 pr-1.5 pb-0.5">
        {OBV_LEFT.map((p) => <span key={p} className="-ml-1">{p}</span>)}
      </div>
      <svg className="absolute top-[819px] right-0 h-[142px] w-[5px]" stroke="#808080" shapeRendering="crispEdges">
        {OBV_LEFT.map((p, i) => <path key={p} d={`M0 ${1.5 + i * 19}h5M3 ${11.5 + i * 19}h2`} />)}
      </svg>
      <svg viewBox="0 0 14 14" className="absolute top-5 left-[5px] size-[14px] bg-[#f0f0f0]" fill="none" stroke="#707070" shapeRendering="crispEdges">
        <path d="M.5 .5h13v13H.5z" stroke="#000" />
        <path d="M2.500 2.500h9v9h-9zM5.500 2.500v9M8.500 2.500v9M2.500 5.500h9" />
      </svg>
      <div className="absolute top-[687px] left-px h-[29px] w-[37px] border border-black bg-[#ffdb70]">
        <p className="pr-1 leading-[13px]">6,970</p>
        <p className="pr-px leading-[13px] text-[#0000ff]">-2,92%</p>
      </div>
      <div className="absolute top-[741px] left-[3px] w-[34px] text-center">
        <p className="bg-[#0a50c8] leading-[13px] text-white">6,950</p>
        <p className="leading-3 text-[#0a50c8]">1,20%</p>
      </div>
    </div>
  )
}

function RightAxis() {
  return (
    <div className="relative w-[47px] shrink-0 overflow-hidden border-l border-[#909090] bg-white text-[11px] leading-[14px] text-[#404040]">
      <div className="flex h-[804px] flex-col justify-between border-b border-[#909090] pt-[25px] pb-[17px]">
        {SCALE.map((p) => (
          <span key={p} className="flex items-center gap-[2px]"><i className="h-px w-[5px] bg-[#808080]" />{p}</span>
        ))}
      </div>
      <div className="flex h-[157px] flex-col justify-between pt-[18px] pb-[22px]">
        {OBV_RIGHT.map((p) => (
          <span key={p} className="flex items-center gap-[2px]"><i className="h-px w-[5px] bg-[#808080]" />{p}</span>
        ))}
      </div>
      <svg className="absolute top-0 left-0 h-[961px] w-[3px]" stroke="#808080" shapeRendering="crispEdges">
        {Array.from({ length: 42 }, (_, i) => <path key={i} d={`M0 ${33.5 + Math.round(i * 18.7)}h2`} />)}
        {Array.from({ length: 30 }, (_, i) => <path key={i} d={`M0 ${809.5 + i * 5}h2`} />)}
      </svg>
      <div className="absolute top-0 left-px leading-3">
        <p className="text-[#e61400]">LC:0,14</p>
        <p className="text-[#0a50c8]">HC:-4,14</p>
      </div>
      <div className="absolute top-[687px] left-[3px] h-[29px] w-[42px] border border-black bg-[#ffdb70] text-center">
        <p className="leading-[13px]">6,970</p>
        <p className="leading-[13px] text-[#0000ff]">-2,92%</p>
      </div>
      <div className="absolute top-[741px] left-1 w-10 text-center">
        <p className="bg-[#0a50c8] leading-[13px] text-white">6,950</p>
        <p className="leading-3 text-[#0a50c8]">-3,20%</p>
      </div>
      <button aria-label="Close pane" className="absolute top-[807px] right-0.5 size-2 bg-[#404040] text-white"><X className="size-2" /></button>
    </div>
  )
}

function TimeAxis() {
  return (
    <div className="relative flex h-[19px] border-t border-b border-[#909090] bg-white text-[11px] leading-[15px] text-[#404040]">
      <div className="w-[42px] shrink-0" />
      <div className="flex min-w-0 flex-1 whitespace-nowrap">
        {TIMES.map(([t, w], i) => (
          <span key={i} className="min-w-0 basis-0" style={{ flexGrow: w }}>
            <span className={`block h-full border-l border-[#909090] pl-px ${i === 0 ? 'text-xs leading-[15px] font-bold' : ''}`}>{t}</span>
          </span>
        ))}
      </div>
      <div className="w-[47px] shrink-0 overflow-hidden border-l border-[#909090] pl-2 whitespace-nowrap">15:30:0</div>
      <div className="absolute -top-px right-[593px] h-[18px] w-[136px] border border-black bg-[#ffdb70] text-center text-xs leading-[15px] whitespace-nowrap">2025/02/19(수) 12:09:25</div>
    </div>
  )
}

const btn = 'flex h-full items-center justify-center border-r border-[#a0a0a0] last:border-r-0'
const group = 'flex h-5 shrink-0 border border-[#909090] bg-[#ececec]'

function Group({ items, active }) {
  return (
    <div className={`${group} -ml-px`}>
      {items.map((t) => (
        <button key={t} className={`${btn} w-[19px] ${t === active ? 'bg-[#4a80c8] text-white' : ''}`}>{t}</button>
      ))}
    </div>
  )
}

function Arrow() {
  return <span className="flex h-full w-[14px] items-center justify-center border-l border-[#a0a0a0] bg-[#ececec] text-[7px] text-[#505050]">▼</span>
}

function Toolbar() {
  return (
    <div className="flex h-5 items-center gap-px text-xs leading-4 whitespace-nowrap text-black">
      <button aria-label="Panel" className={`${group} w-5 items-center justify-center`}>
        <svg viewBox="0 0 14 14" className="size-[14px]" fill="none" stroke="#303030" shapeRendering="crispEdges">
          <path d="M3.500 1.500h9v11h-9zM3 2.500h10" /><path d="M3 6l4 3-4 3z" fill="#303030" stroke="none" /><path d="M.5 5v7" />
        </svg>
      </button>
      <div className={`${group} w-8 bg-white`}><span className="flex-1 text-center text-[#606060]">주</span><Arrow /></div>
      <button className={`${group} w-5 items-center justify-center`}>전</button>
      <div className={`${group} w-[88px]`}>
        <input aria-label="Code" defaultValue="419120" className="w-[54px] min-w-0 bg-white pl-[3px] text-[11px]" />
        <Arrow />
        <button aria-label="Search" className="flex w-[18px] items-center justify-center border-l border-[#a0a0a0]"><Search className="size-3 text-[#606060]" /></button>
      </div>
      <div className={`${group} w-7`}>
        <button aria-label="Sound" className="flex flex-1 items-center justify-center"><Volume1 className="size-[13px] fill-[#606060] text-[#606060]" /></button>
        <span className="flex w-[10px] items-center justify-center border-l border-[#a0a0a0] text-[6px]">▼</span>
      </div>
      <div className={`${group} w-[82px] items-center gap-0.5 bg-white px-px`}>
        <span className="bg-[#006060] px-0.5 text-white">신</span>
        <span className="text-[#800040]">산돌</span>
        <span className="ml-auto self-end border-b-8 border-l-8 border-b-[#b0b0b0] border-l-transparent" />
      </div>
      <Group items={['일', '주', '월', '년']} />
      <Group items={['분', '초', '틱']} active="초" />
      <div className="text-[11px]"><Group items={['1', '3', '5', '10', '15', '30', '45', '60']} active="5" /></div>
      <div className={`${group} w-[38px] bg-white text-[11px]`}><input aria-label="Interval" defaultValue="5" className="w-[22px] min-w-0 text-center" /><Arrow /></div>
      <input aria-label="Count" defaultValue="904" className="h-5 w-[30px] border border-[#909090] bg-white text-right text-[11px]" />
      <span className="mr-0.5 w-[31px] text-[11px] text-[#505050]">/2700</span>
      <div className={`${group} w-[77px] text-[#505050]`}>
        <button aria-label="Candles" className={`${btn} w-[19px]`}>
          <svg viewBox="0 0 16 16" className="size-4" fill="currentColor"><path d="M1 4h1V2h1v2h1v6H3v2H2v-2H1z" /><path d="M7 4h1V1h1v3h2v5H9v2H8V9H7z" fill="#999" /><path d="M12 9h1v2h3v2h-3v3h-1v-3h-2v-2h2z" /></svg>
        </button>
        <button aria-label="Indicators" className={`${btn} w-[19px]`}>
          <svg viewBox="0 0 16 16" className="size-4" fill="none" stroke="currentColor"><path d="M0 7l4-4 4 5 5-6 2 3" /><path d="M0 3l3 1 3 4 3-3 4 4" stroke="#999" strokeDasharray="2 1" /><path d="M12 9v6M9 12h6" strokeWidth="2" /></svg>
        </button>
        <button aria-label="Save" className={`${btn} w-[19px]`}><Save className="size-[15px]" /></button>
        <button aria-label="Settings" className={`${btn} w-[18px]`}><Settings className="size-[14px]" strokeWidth={3} /></button>
      </div>
      <label className="flex items-center gap-[3px]">
        <input type="checkbox" className="size-[13px] appearance-none border border-[#909090] bg-white" />D
      </label>
    </div>
  )
}

function Quote() {
  return (
    <div className="mt-[3px] flex h-5 items-center gap-0.5 text-[11px] leading-[17px] whitespace-nowrap text-black">
      <div className="flex h-5 w-[750px] border border-[#808080] bg-[#f0f0f0]">
        <div className="grid w-[172px] grid-cols-[60px_12px_50px_47px] border-r border-[#b0b0b0] text-right text-[#1446c8]">
          <span>6,950</span><span>▼</span><span>230</span><span>-3.20%</span>
        </div>
        <div className="grid w-[170px] grid-cols-[70px_57px_41px] border-r border-[#b0b0b0] text-right">
          <span>130,928</span><span className="text-[#1446c8]">5.18%</span><span>1.68%</span>
        </div>
        <div className="w-[83px] border-r border-[#b0b0b0] pr-px text-right">928백만</div>
        <div className="grid w-[139px] grid-cols-[36px_42px_50px] border-r border-[#b0b0b0] text-right text-[#1446c8]">
          <span className="text-xs leading-[17px] text-black">최우선</span><span>6,990</span><span>6,950</span>
        </div>
        <div className="grid flex-1 grid-cols-[12px_38px_24px_38px_23px_38px] text-right text-xs leading-[17px] text-[#e61400]">
          <span className="text-black">시</span><span>7,220</span><span className="text-black">고</span><span>7,250</span><span className="text-black">저</span><span className="text-[#1446c8]">6,940</span>
        </div>
      </div>
      <button className="h-5 w-10 border border-[#909090] bg-[#f5d0cb] text-xs">매수</button>
      <button className="h-5 w-10 border border-[#909090] bg-[#c6dcf2] text-xs">매도</button>
    </div>
  )
}

const tool = 'flex size-[17px] shrink-0 items-center justify-center'
const media = 'flex h-4 w-[17px] shrink-0 items-center justify-center border border-t-white border-r-[#606060] border-b-[#606060] border-l-white bg-[#ececec] text-black'

function ToolIcon({ children }) {
  return <svg viewBox="0 0 14 14" className="size-[14px]" fill="none" stroke="currentColor">{children}</svg>
}

function BottomBar() {
  return (
    <div className="flex h-[17px] items-center text-[#606060]">
      <button aria-label="Scroll left" className={media}><svg viewBox="0 0 8 8" className="size-2"><path d="M6 0v8L2 4z" /></svg></button>
      <div className="flex h-full flex-1 bg-[repeating-conic-gradient(#fff_0_25%,#ececec_0_50%)] bg-[length:2px_2px]">
        <div className="ml-auto h-4 w-[33.5%] border border-t-white border-r-[#606060] border-b-[#606060] border-l-white bg-[#f0f0f0]" />
      </div>
      <button aria-label="Play" className={media}><svg viewBox="0 0 8 8" className="size-2"><path d="M2 0v8l4-4z" /></svg></button>
      <button aria-label="Rewind" className={media}><svg viewBox="0 0 10 8" className="h-2 w-[10px]"><path d="M5 0v8L0 4zM10 0v8L5 4z" /></svg></button>
      <button aria-label="Stop" className={media}><svg viewBox="0 0 8 8" className="size-2"><path d="M1 0h6v8H1z" /></svg></button>
      <button aria-label="Forward" className={media}><svg viewBox="0 0 10 8" className="h-2 w-[10px]"><path d="M0 0v8l5-4zM5 0v8l5-4z" /></svg></button>
      <div className="mx-[5px] w-[70px]">
        <input type="range" aria-label="Speed" defaultValue="35" className="block h-2.5 w-full appearance-none bg-[linear-gradient(#808080,#808080)] bg-[length:100%_2px] bg-center bg-no-repeat [&::-webkit-slider-thumb]:h-2.5 [&::-webkit-slider-thumb]:w-1 [&::-webkit-slider-thumb]:appearance-none [&::-webkit-slider-thumb]:border [&::-webkit-slider-thumb]:border-[#808080] [&::-webkit-slider-thumb]:bg-white" />
        <div className="mx-0.5 h-[3px] bg-[repeating-linear-gradient(90deg,#000_0_1px,transparent_1px_7px)]" />
      </div>
      <button aria-label="New" className={tool}><ToolIcon><path d="M6 10.500H1.500v-9h9V6M6.500 6.500h7v7h-7zM10 6.500v7M6.500 10h7" /></ToolIcon></button>
      <button aria-label="Copy" className={tool}><ToolIcon><path d="M5 8.500H.5v-7h8V5" /><path d="M5.500 5.500h8v7h-8z" fill="#fff" /><path d="M5.500 6.500h8" /></ToolIcon></button>
      <button aria-label="Range" className={tool}><ToolIcon><path d="M0 2.500h14M0 12.500h14" strokeDasharray="1 1" /><path d="M1 9l3-3 3 3 3-4 2 2M12.500 3v3M12.500 9v3" /></ToolIcon></button>
      <button aria-label="Cross" className={`${tool} border border-[#a0a0a0] bg-white`}><ToolIcon><path d="M1 4.500h12M4.500 1v12M6 6l6 6M6 9V6h4" /></ToolIcon></button>
      <button aria-label="Peak" className={tool}><ToolIcon><path d="M0 3.500h14M1 12l4-8 3 6 2-3 3 4" /></ToolIcon></button>
      <button aria-label="Level" className={tool}><ToolIcon><path d="M3.500 0v14" stroke="#804060" /><path d="M0 12l3-3 3-4 3 6 2-4 3 2" /></ToolIcon></button>
      <button aria-label="Trend" className={tool}><ToolIcon><path d="M1 13L11 1" stroke="#804060" /><path d="M1 11l4-4 3 5 2-7 3 5" /></ToolIcon></button>
      <button aria-label="Erase" className={tool}><Eraser className="size-[14px]" /></button>
      <button aria-label="Window" className={tool}><ToolIcon><path d="M4.500 4V.5h9v8H11M.5 4.500h10v9H.5z" /><path d="M2 11l2-3 2 3 3-4M6 3l2 0 3-1" /></ToolIcon></button>
      <button aria-label="Zoom" className={tool}><Search className="size-[14px]" /></button>
      <button aria-label="Zoom out" className={tool}><Minus className="size-[14px]" strokeWidth={3} /></button>
      <button aria-label="Zoom in" className={tool}><Plus className="size-[14px]" strokeWidth={3} /></button>
      <button className={`${tool} text-sm font-bold`}>A</button>
    </div>
  )
}

function TitleBar() {
  return (
    <header className="mx-px flex h-6 items-center bg-[#3a5591] pr-1 pl-0.5 text-white">
      <span className="mr-1 flex h-[15px] w-[14px] shrink-0 items-center justify-center rounded-sm border border-white/80 text-[11px] font-bold">1</span>
      <h1 className="flex gap-[7px] text-[13px] leading-5 whitespace-nowrap">
        {FACTS.map((f) => <span key={f}>{f}</span>)}
      </h1>
      <div className="ml-auto flex items-center text-[#b8c4e0]">
        <button aria-label="Link" className="flex w-5 justify-center"><svg viewBox="0 0 13 12" className="h-3 w-[13px]" fill="none" stroke="currentColor"><path d="M5.500 1.500h7v6h-7zM5 4.500H.5v7h8V8M5.500 2.500h7" /></svg></button>
        <button aria-label="Fold" className="flex w-5 justify-center pt-1.5"><svg viewBox="0 0 13 4" className="h-1 w-[13px]" fill="none" stroke="currentColor"><path d="M0 .5h13M1 3.500h12" /></svg></button>
        <button aria-label="Duplicate" className="flex w-5 justify-center"><svg viewBox="0 0 13 12" className="h-3 w-[13px]" fill="none" stroke="currentColor"><path d="M3.500 .5h9v7h-9zM2 3.500H.5v7h9V9" /></svg></button>
        <button aria-label="Pin" className="flex w-5 justify-center"><Pin className="size-[14px] fill-current" /></button>
        <button className="w-[17px] font-[Liberation_Serif] text-base leading-4 font-bold">T</button>
        <button className="w-[17px] font-[Liberation_Serif] text-base leading-4 font-bold">?</button>
        <span className="mr-1 h-[14px] w-px bg-[#8090b0]" />
        <button aria-label="Minimize" className="flex w-5 justify-center pt-1.5"><svg viewBox="0 0 10 2" className="h-0.5 w-[10px]" fill="currentColor"><path d="M0 0h10v2H0z" /></svg></button>
        <button aria-label="Restore" className="flex w-5 justify-center"><svg viewBox="0 0 11 10" className="h-[10px] w-[11px]" fill="none" stroke="currentColor"><path d="M3.500 3V.5h7v6H8M.5 3.500h7v6h-7zM.5 4.500h7" /></svg></button>
        <button aria-label="Close" className="flex w-4 justify-center"><X className="size-3" /></button>
      </div>
    </header>
  )
}

export default function App() {
  return (
    <div className="flex min-h-screen flex-col bg-black pt-px font-['Noto_Sans_CJK_KR',sans-serif]">
      <TitleBar />
      <main className="mx-[3px] bg-[#d1d1d1] px-[3px] pt-[5px]">
        <Toolbar />
        <Quote />
        <section className="mt-[3px] border border-b-0 border-[#909090]">
          <div className="flex">
            <LeftAxis />
            <div className="relative min-w-0 flex-1 overflow-hidden">
              <Chart />
              <Labels />
            </div>
            <RightAxis />
          </div>
          <TimeAxis />
        </section>
        <div className="-mx-[3px] bg-[#f0f0f0] px-[3px] pb-[3px]">
          <BottomBar />
        </div>
      </main>
    </div>
  )
}
